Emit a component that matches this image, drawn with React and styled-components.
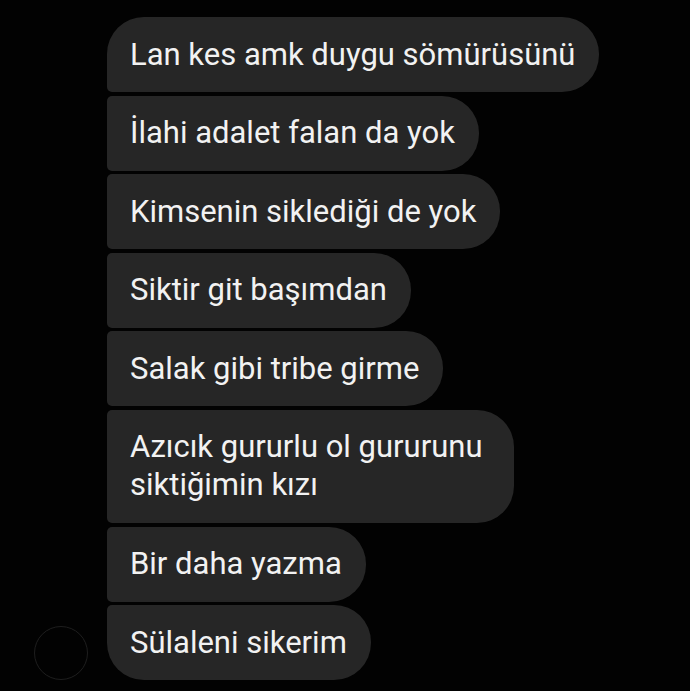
import React from "react";
import styled, { createGlobalStyle } from "styled-components";

const messages = [
  "Lan kes amk duygu sömürüsünü",
  "İlahi adalet falan da yok",
  "Kimsenin siklediği de yok",
  "Siktir git başımdan",
  "Salak gibi tribe girme",
  "Azıcık gururlu ol gururunu \nsiktiğimin kızı",
  "Bir daha yazma",
  "Sülaleni sikerim",
];

const GlobalStyle = createGlobalStyle`
  html, body {
    margin: 0;
    background: #020202;
  }
  body {
    font-family: Roboto, "Liberation Sans", sans-serif;
  }
`;

const Screen = styled.div`
  width: 690px;
  height: 691px;
  overflow: hidden;
  background: #020202;
  box-sizing: border-box;
  padding: 17px 0 0 34px;
`;

const Group = styled.div`
  display: flex;
  align-items: flex-end;
  gap: 19px;
`;

const Avatar = styled.div`
  width: 54px;
  height: 54px;
  flex: none;
  border-radius: 50%;
  box-sizing: border-box;
  border: 1.5px solid #1e1e1e;
  background: #020202;
`;

const Stack = styled.div`
  display: flex;
  flex-direction: column;
  align-items: flex-start;
  gap: 3.6px;
`;

const Bubble = styled.div`
  background: #262626;
  color: #f2f2f2;
  font-size: 31px;
  line-height: 38px;
  white-space: break-spaces;
  padding: 18.5px 24px 18.5px 23px;
  border-radius: ${({ $first, $last }) =>
    `${$first ? 37 : 5}px 37px 37px ${$last ? 37 : 5}px`};
`;

export default function App() {
  return (
    <>
      <GlobalStyle />
      <Screen>
        <Group>
          <Avatar />
          <Stack>
            {messages.map((m, i) => (
              <Bubble
                key={i}
                $first={i === 0}
                $last={i === messages.length - 1}
              >
                {m}
              </Bubble>
            ))}
          </Stack>
        </Group>
      </Screen>
    </>
  );
}
